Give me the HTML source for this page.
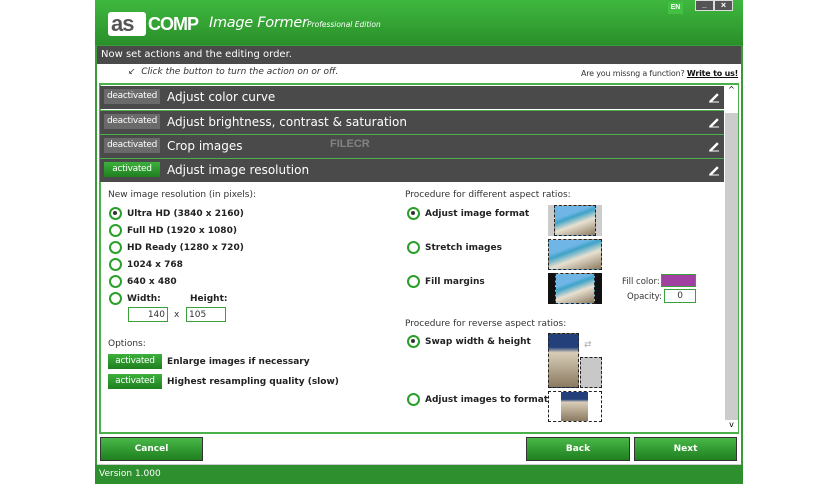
<!DOCTYPE html>
<html><head><meta charset="utf-8"><style>
*{margin:0;padding:0;box-sizing:border-box}
body{width:836px;height:484px;background:#fff;position:relative;font-family:"DejaVu Sans","Liberation Sans",sans-serif;overflow:hidden}
.a{position:absolute}
.win{left:95px;top:0;width:648px;height:484px;background:#3a9a3a}
.title{left:95px;top:0;width:648px;height:45px;background:linear-gradient(#3fb83f,#2a8f2a)}
.bar{left:97px;top:46px;width:644px;height:18px;background:#4a4a4a;color:#fff;font-size:10px;line-height:18px;padding-left:4px}
.main{left:97px;top:64px;width:644px;height:400px;background:#fff}
.row{left:100px;width:624px;height:23px;background:#4a4a4a;color:#fff;font-size:12px;line-height:23px}
.row span.l{position:absolute;left:67px}
.db{position:absolute;left:4px;top:3px;width:56px;height:15px;background:#6a6a6a;color:#fff;font-size:9px;line-height:15px;text-align:center;letter-spacing:-.3px}
.ab{background:linear-gradient(#3cb03c,#1f7f1f)}
.pen{position:absolute;left:608px;top:5px;width:12px;height:12px}
.rad{width:13px;height:13px;border:2.5px solid #2aa02a;border-radius:50%;background:#fff}
.rad.on::after{content:"";position:absolute;left:2px;top:2px;width:4px;height:4px;background:#333;border-radius:50%}
.t{font-size:9px;color:#222;font-weight:bold;white-space:nowrap}
.s{font-size:9px;color:#333;white-space:nowrap}
.btn{height:24px;background:linear-gradient(#48b848,#1f7f1f);border:1px solid #333;color:#fff;font-weight:bold;font-size:9px;text-align:center;line-height:22px}
.img{background:linear-gradient(160deg,#6fb6e6 0 30%,#3fa3c8 40%,#e8e0d0 60%,#8a7a60);border:1px dashed #222}
</style></head><body>
<div class="a win"></div>
<div class="a title"></div>
<div class="a" style="left:108px;top:12px;width:38px;height:24px;background:#fff;border-radius:3px"></div>
<div class="a" style="left:111px;top:11px;font:bold 22px 'Liberation Sans',sans-serif;color:#555;letter-spacing:-1px">as</div>
<div class="a" style="left:148px;top:14px;font:bold 18px 'Liberation Sans',sans-serif;color:#fff;letter-spacing:-1px">COMP</div>
<div class="a" style="left:209px;top:15px;color:#fff;font:italic 14.5px 'DejaVu Sans',sans-serif;letter-spacing:-0.3px">Image Former</div>
<div class="a" style="left:307px;top:20px;color:#fff;font:italic 7.5px 'DejaVu Sans',sans-serif">Professional Edition</div>
<div class="a" style="left:668px;top:2px;width:15px;height:12px;background:#44c044;color:#fff;font:bold 7px sans-serif;text-align:center;line-height:12px">EN</div>
<div class="a" style="left:695px;top:0;width:19px;height:11px;border:1px solid #ddd;background:#555;color:#fff;font:bold 8px sans-serif;text-align:center;line-height:8px">_</div>
<div class="a" style="left:714px;top:0;width:19px;height:11px;border:1px solid #ddd;background:#555;color:#fff;font:bold 9px sans-serif;text-align:center;line-height:9px">×</div>
<div class="a bar">Now set actions and the editing order.</div>
<div class="a main"></div>
<div class="a" style="left:128px;top:67px;font:italic 9px 'DejaVu Sans',sans-serif;color:#333">↙&nbsp;&nbsp;Click the button to turn the action on or off.</div>
<div class="a s" style="left:581px;top:69px;font-size:8px;letter-spacing:-0.2px">Are you missng a function? <b style="text-decoration:underline;color:#111">Write to us!</b></div>
<div class="a" style="left:99px;top:83px;width:640px;height:351px;border:2px solid #4ab04a"></div>
<div class="a" style="left:725px;top:85px;width:13px;height:347px;background:#ccc"></div>
<div class="a" style="left:725px;top:85px;width:13px;height:28px;background:#fff;font-size:8px;text-align:center">^</div>
<div class="a" style="left:725px;top:420px;width:13px;height:12px;background:#fff;font-size:8px;text-align:center">v</div>
<div class="a row" style="top:86px"><div class="db">deactivated</div><span class="l">Adjust color curve</span><svg class="pen" viewBox="0 0 12 12"><path d="M2 10 L9 3 L10 4 L3 11 Z M1 11 H11" stroke="#fff" fill="#fff" stroke-width="1"/></svg></div>
<div class="a row" style="top:111px"><div class="db">deactivated</div><span class="l">Adjust brightness, contrast &amp; saturation</span><svg class="pen" viewBox="0 0 12 12"><path d="M2 10 L9 3 L10 4 L3 11 Z M1 11 H11" stroke="#fff" fill="#fff"/></svg></div>
<div class="a row" style="top:135px"><div class="db">deactivated</div><span class="l">Crop images</span><svg class="pen" viewBox="0 0 12 12"><path d="M2 10 L9 3 L10 4 L3 11 Z M1 11 H11" stroke="#fff" fill="#fff"/></svg></div>
<div class="a row" style="top:159px"><div class="db ab">activated</div><span class="l">Adjust image resolution</span><svg class="pen" viewBox="0 0 12 12"><path d="M2 10 L9 3 L10 4 L3 11 Z M1 11 H11" stroke="#fff" fill="#fff"/></svg></div>
<div class="a" style="left:100px;top:110px;width:624px;height:1px;background:#4ab04a"></div>
<div class="a" style="left:100px;top:134px;width:624px;height:1px;background:#4ab04a"></div>
<div class="a" style="left:100px;top:158px;width:624px;height:1px;background:#4ab04a"></div>
<div class="a" style="left:330px;top:138px;color:#aaa;font:bold 11px sans-serif;opacity:.6">FILECR</div>

<div class="a s" style="left:108px;top:190px">New image resolution (in pixels):</div>
<div class="a rad on" style="left:109px;top:207px"></div><div class="a t" style="left:127px;top:209px">Ultra HD (3840 x 2160)</div>
<div class="a rad" style="left:109px;top:224px"></div><div class="a t" style="left:127px;top:226px">Full HD (1920 x 1080)</div>
<div class="a rad" style="left:109px;top:241px"></div><div class="a t" style="left:127px;top:243px">HD Ready (1280 x 720)</div>
<div class="a rad" style="left:109px;top:258px"></div><div class="a t" style="left:127px;top:260px">1024 x 768</div>
<div class="a rad" style="left:109px;top:275px"></div><div class="a t" style="left:127px;top:277px">640 x 480</div>
<div class="a rad" style="left:109px;top:292px"></div><div class="a t" style="left:127px;top:294px">Width:</div><div class="a t" style="left:190px;top:294px">Height:</div>
<div class="a s" style="left:128px;top:307px;width:40px;height:15px;border:1.5px solid #3aa03a;text-align:right;padding:2px 2px 0 0">140</div>
<div class="a s" style="left:174px;top:310px">x</div>
<div class="a s" style="left:186px;top:307px;width:40px;height:15px;border:1.5px solid #3aa03a;padding:2px 0 0 2px">105</div>
<div class="a s" style="left:108px;top:339px">Options:</div>
<div class="a db ab" style="left:108px;top:354px;width:54px;height:15px">activated</div><div class="a t" style="left:167px;top:357px">Enlarge images if necessary</div>
<div class="a db ab" style="left:108px;top:374px;width:54px;height:15px">activated</div><div class="a t" style="left:167px;top:377px">Highest resampling quality (slow)</div>

<div class="a s" style="left:405px;top:190px">Procedure for different aspect ratios:</div>
<div class="a rad on" style="left:407px;top:207px"></div><div class="a t" style="left:425px;top:209px">Adjust image format</div>
<div class="a rad" style="left:407px;top:241px"></div><div class="a t" style="left:425px;top:243px">Stretch images</div>
<div class="a rad" style="left:407px;top:275px"></div><div class="a t" style="left:425px;top:277px">Fill margins</div>
<div class="a" style="left:548px;top:205px;width:54px;height:31px;background:#ccc"></div><div class="a img" style="left:554px;top:205px;width:42px;height:31px"></div>
<div class="a img" style="left:548px;top:239px;width:54px;height:31px"></div>
<div class="a" style="left:548px;top:273px;width:54px;height:31px;background:#111"></div><div class="a img" style="left:555px;top:273px;width:40px;height:31px"></div>
<div class="a s" style="left:622px;top:277px;font-size:8.5px">Fill color:</div>
<div class="a" style="left:661px;top:274px;width:35px;height:13px;background:#a040a0;border:1.5px solid #3aa03a"></div>
<div class="a s" style="left:627px;top:292px;font-size:8.5px">Opacity:</div>
<div class="a s" style="left:664px;top:289px;width:32px;height:14px;border:1.5px solid #3aa03a;padding:1px 12px 0 0;text-align:right">0</div>
<div class="a s" style="left:405px;top:319px">Procedure for reverse aspect ratios:</div>
<div class="a rad on" style="left:407px;top:335px"></div><div class="a t" style="left:425px;top:337px">Swap width &amp; height</div>
<div class="a rad" style="left:407px;top:393px"></div><div class="a t" style="left:425px;top:395px">Adjust images to format</div>
<div class="a" style="left:548px;top:333px;width:31px;height:55px;background:linear-gradient(#23407a 0 25%,#d8cdb8 35%,#8a7a60);border:1px dashed #222"></div>
<div class="a" style="left:580px;top:357px;width:22px;height:31px;background:#c8c8c8;border:1px dashed #222"></div>
<div class="a s" style="left:584px;top:340px;color:#aaa">⇄</div>
<div class="a" style="left:548px;top:391px;width:54px;height:31px;border:1px dashed #222"></div>
<div class="a" style="left:561px;top:392px;width:27px;height:29px;background:linear-gradient(#23407a 0 25%,#d8cdb8 35%,#8a7a60)"></div>

<div class="a btn" style="left:100px;top:437px;width:103px">Cancel</div>
<div class="a btn" style="left:526px;top:437px;width:104px">Back</div>
<div class="a btn" style="left:634px;top:437px;width:103px">Next</div>
<div class="a" style="left:97px;top:464px;width:644px;height:1px;background:#ccc"></div>
<div class="a" style="left:95px;top:465px;width:648px;height:19px;background:#2e8f2e;color:#fff;font-size:9px;line-height:19px;padding-left:4px">Version 1.000</div>
</body></html>
